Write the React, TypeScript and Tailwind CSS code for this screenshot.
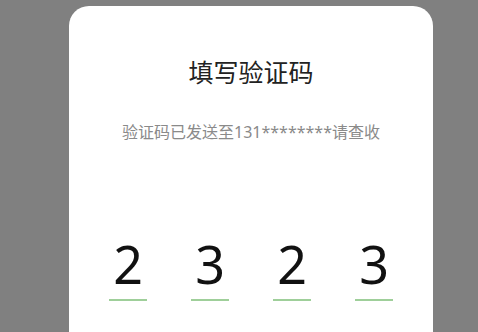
import { FC } from "react";

const digits = ["2", "3", "2", "3"];

const CodeCell: FC<{ value: string }> = ({ value }) => (
  <div className="flex flex-col items-center w-[38px]">
    <span className="text-[52px] leading-[60px] font-normal text-[#111] font-['Noto_Sans','Open_Sans',sans-serif]">
      {value}
    </span>
    <div className="mt-[5px] h-[2px] w-[38px] bg-[#9fcf9a]" />
  </div>
);

export default function App() {
  return (
    <div className="w-[478px] h-[332px] overflow-hidden bg-[#808080] font-['Noto_Sans','Noto_Sans_CJK_SC',sans-serif]">
      <div className="ml-[69px] mt-[6px] w-[364px] h-[360px] bg-white rounded-[20px] flex flex-col items-center pt-[50px]">
        <h1 className="text-[25px] leading-[32px] text-[#222] font-normal">填写验证码</h1>
        <p className="mt-[34px] text-[16px] leading-[20px] text-[#8a8a8a]">
          验证码已发送至131********请查收
        </p>
        <div className="mt-[92px] flex gap-[44px]">
          {digits.map((d, i) => (
            <CodeCell key={i} value={d} />
          ))}
        </div>
      </div>
    </div>
  );
}
